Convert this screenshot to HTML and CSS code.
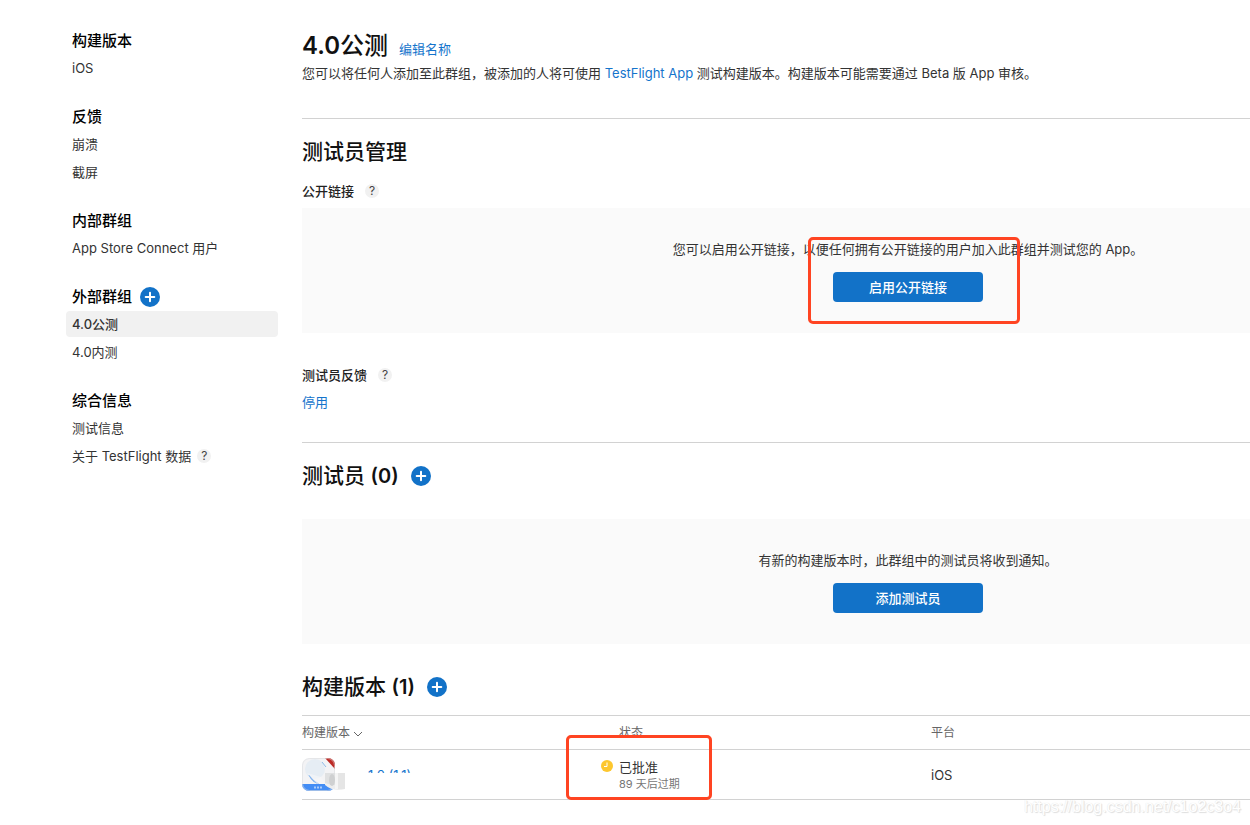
FILE: index.html
```html
<!DOCTYPE html>
<html lang="zh-CN">
<head>
<meta charset="utf-8">
<title>TestFlight - 4.0公测</title>
<link rel="stylesheet" href="styles.css">
</head>
<body>
<div class="page">
  <nav class="sidebar">
    <section class="group">
      <h3 class="group-title">构建版本</h3>
      <a class="item" href="#">iOS</a>
    </section>
    <section class="group">
      <h3 class="group-title">反馈</h3>
      <a class="item" href="#">崩溃</a>
      <a class="item" href="#">截屏</a>
    </section>
    <section class="group">
      <h3 class="group-title">内部群组</h3>
      <a class="item" href="#">App Store Connect 用户</a>
    </section>
    <section class="group">
      <div class="group-head">
        <h3 class="group-title">外部群组</h3>
        <button class="add" type="button" aria-label="添加群组"><svg viewBox="0 0 20 20"><path d="M10 5.7v8.6M5.7 10h8.6"/></svg></button>
      </div>
      <a class="item item-active" href="#">4.0公测</a>
      <a class="item" href="#">4.0内测</a>
    </section>
    <section class="group">
      <h3 class="group-title">综合信息</h3>
      <a class="item" href="#">测试信息</a>
      <div class="item-row">
        <a class="item" href="#">关于 TestFlight 数据</a>
        <button class="help" type="button">?</button>
      </div>
    </section>
  </nav>

  <main class="main">
    <header class="intro">
      <div class="title-row">
        <h1 class="title"><strong>4.0</strong>公测</h1>
        <a class="link" href="#">编辑名称</a>
      </div>
      <p class="text">您可以将任何人添加至此群组，被添加的人将可使用 <a class="link" href="#">TestFlight App</a> 测试构建版本。构建版本可能需要通过 Beta 版 App 审核。</p>
    </header>

    <section class="section">
      <h2 class="heading">测试员管理</h2>
      <div class="label-row">
        <h4 class="label">公开链接</h4>
        <button class="help" type="button">?</button>
      </div>
      <div class="panel">
        <p class="text">您可以启用公开链接，以便任何拥有公开链接的用户加入此群组并测试您的 App。</p>
        <div class="action">
          <button class="primary" type="button">启用公开链接</button>
          <span class="mark mark-button"></span>
        </div>
      </div>
      <div class="label-row label-row-feedback">
        <h4 class="label">测试员反馈</h4>
        <button class="help" type="button">?</button>
      </div>
      <a class="link toggle" href="#">停用</a>
    </section>

    <section class="section">
      <div class="heading-row">
        <h2 class="heading">测试员 <strong>(0)</strong></h2>
        <button class="add" type="button" aria-label="添加测试员"><svg viewBox="0 0 20 20"><path d="M10 5.7v8.6M5.7 10h8.6"/></svg></button>
      </div>
      <div class="panel panel-testers">
        <p class="text">有新的构建版本时，此群组中的测试员将收到通知。</p>
        <button class="primary" type="button">添加测试员</button>
      </div>
      <div class="heading-row heading-row-builds">
        <h2 class="heading">构建版本 <strong>(1)</strong></h2>
        <button class="add" type="button" aria-label="添加构建版本"><svg viewBox="0 0 20 20"><path d="M10 5.7v8.6M5.7 10h8.6"/></svg></button>
      </div>
      <table class="builds">
        <thead>
          <tr>
            <th class="col-build">构建版本<svg class="chevron" viewBox="0 0 10 6"><path d="M1 1l4 4 4-4"/></svg></th>
            <th class="col-status">状态</th>
            <th>平台</th>
          </tr>
        </thead>
        <tbody>
          <tr>
            <td>
              <div class="build">
                <svg class="app-icon" viewBox="0 0 44 34">
                  <defs><clipPath id="tile"><rect width="33" height="33" rx="7"/></clipPath></defs>
                  <g clip-path="url(#tile)">
                    <rect width="33" height="33" fill="#f3f3f5"/>
                    <ellipse cx="13" cy="11" rx="10" ry="10" fill="#e6edf4"/>
                    <path d="M23 0h10v11z" fill="#bd2a25"/>
                    <path d="M20 4l4 5" stroke="#8fbce8"/>
                    <path d="M7 17q4 6 10 9-7-2-10-9z" fill="#5b9bea" stroke="#82b3ee"/>
                    <path d="M5 15l11 12h8l-5-8z" fill="#f7f7f8" opacity=".6"/>
                    <rect y="26" width="33" height="7" fill="#438df5"/>
                    <path d="M12 29.5h9" stroke="#a9cbfa" stroke-width="2" stroke-dasharray="2 1"/>
                    <rect x=".5" y=".5" width="32" height="32" rx="7" fill="none" stroke="#dcdde0" stroke-opacity=".6"/>
                  </g>
                  <path d="M23 15h20v16q-12 3-20-4z" fill="#ededed"/>
                  <path d="M23 15h11v12q-6 0-11-2z" fill="#dfe0e1"/>
                  <ellipse cx="30" cy="22" rx="3" ry="6" fill="#cfd0d1"/>
                  <rect x="33" y="15" width="3" height="16" fill="#f5f5f5"/>
                  <rect x="36" y="15" width="7" height="16" fill="#e5e5e5"/>
                </svg>
                <a class="link build-link" href="#">1.0 (1.1)</a>
              </div>
            </td>
            <td>
              <div class="status">
                <svg class="clock" viewBox="0 0 12 12"><circle cx="6" cy="6" r="6" fill="#fdc72f"/><path d="M6 2.5v4H3" fill="none" stroke="#fff"/></svg>
                <div>
                  <div class="status-name">已批准</div>
                  <div class="status-note">89 天后过期</div>
                </div>
              </div>
              <span class="mark mark-status"></span>
            </td>
            <td>iOS</td>
          </tr>
        </tbody>
      </table>
    </section>
  </main>
  <div class="watermark">https://blog.csdn.net/c1o2c3o4</div>
</div>
</body>
</html>
```
FILE: styles.css
```css
* { box-sizing: border-box; }

body {
  margin: 0;
  background: #fff;
  color: #333;
  font: 13px/20px Inter, "Noto Sans CJK SC", sans-serif;
}

h1, h2, h3, h4, p { margin: 0; }
a { text-decoration: none; color: inherit; }
button { border: 0; padding: 0; font: inherit; cursor: pointer; }

.page {
  position: relative;
  display: flex;
  gap: 24px;
  min-height: 100vh;
  padding: 28px 0 0 66px;
}

.sidebar {
  flex: 0 0 212px;
  display: flex;
  flex-direction: column;
  gap: 23px;
}
.group { display: flex; flex-direction: column; gap: 2px; }
.group-head, .item-row { display: flex; align-items: center; }
.group-head { gap: 8px; }
.group-title {
  padding-left: 6px;
  color: #000;
  font-size: 15px;
  font-weight: 500;
  line-height: 25px;
}
.item { padding: 0 6px; line-height: 26px; border-radius: 4px; }
.item-active { background: #f1f1f1; font-weight: 500; }

.add {
  width: 20px;
  height: 20px;
  border-radius: 50%;
  background: #1272c8;
}
.add svg {
  display: block;
  fill: none;
  stroke: #fff;
  stroke-width: 2;
  stroke-linecap: round;
}
.help {
  width: 14px;
  height: 14px;
  border-radius: 50%;
  background: #f1f1f1;
  color: #444;
  font-size: 12px;
  line-height: 14px;
}

.main { flex: 1; min-width: 0; }
.intro { padding: 1px 0 35px; }
.title-row { display: flex; align-items: baseline; gap: 11px; }
.title { color: #111; font-size: 24px; font-weight: 500; line-height: 34px; }
.title strong, .heading strong { font-weight: 600; }
.link { color: #1474cc; }

.section { border-top: 1px solid #d2d2d2; padding: 18px 0 30px; }
.section:last-child { padding-bottom: 24px; }
.heading-row { display: flex; align-items: center; gap: 12px; }
.heading { color: #111; font-size: 21px; font-weight: 500; line-height: 30px; }
.heading strong { font-size: 20px; }
.label-row { display: flex; align-items: center; gap: 11px; margin-top: 14px; }
.label-row-feedback { margin-top: 32px; }
.label { color: #222; font-size: 13px; font-weight: 500; }
.toggle { display: block; width: max-content; margin-top: 7px; }

.panel {
  display: flex;
  flex-direction: column;
  align-items: center;
  gap: 13px;
  margin-top: 7px;
  padding: 31px 0 31px 264px;
  background: #fafafa;
}
.panel-testers { margin-top: 28px; }
.action { position: relative; }
.primary {
  display: block;
  width: 150px;
  height: 30px;
  border-radius: 4px;
  background: #1272c8;
  color: #fff;
  font-weight: 500;
}

.heading-row-builds { margin-top: 28px; }
.builds {
  width: 100%;
  margin-top: 13px;
  border-top: 1px solid #d2d2d2;
  border-spacing: 0;
  table-layout: fixed;
}
.builds th, .builds td {
  padding: 0;
  border-bottom: 1px solid #d2d2d2;
  text-align: left;
}
.builds th { height: 34px; color: #666; font-size: 12px; font-weight: 400; }
.builds td { position: relative; height: 50px; }
.col-build { width: 299px; }
.col-status { width: 330px; }
.builds .col-status { padding-left: 18px; }
.chevron {
  width: 10px;
  height: 6px;
  margin-left: 3px;
  fill: none;
  stroke: #666;
}
.build { display: flex; align-items: flex-start; gap: 22px; }
.app-icon { width: 44px; height: 34px; }
.build-link {
  position: relative;
  margin-top: 9px;
  line-height: 16px;
}
.build-link::after {
  content: "";
  position: absolute;
  inset: 6px 0 0;
  background: #fff;
}
.status { display: flex; gap: 6px; }
.clock { width: 12px; height: 12px; margin-top: 2px; }
.status-name { line-height: 18px; }
.status-note { color: #777; font-size: 11px; line-height: 16px; }

.mark {
  position: absolute;
  border: 3px solid #ff4422;
  border-radius: 5px;
  pointer-events: none;
}
.mark-button { inset: -35px -37px -22px -25px; }
.mark-status { top: -15px; left: -35px; width: 146px; height: 65px; }

.watermark {
  position: absolute;
  right: 9px;
  top: 797px;
  color: #fff;
  font: 16px/20px "Liberation Sans", sans-serif;
  text-shadow: 1px 1px 1px #ddd, 0 0 1px #ddd;
}
```
